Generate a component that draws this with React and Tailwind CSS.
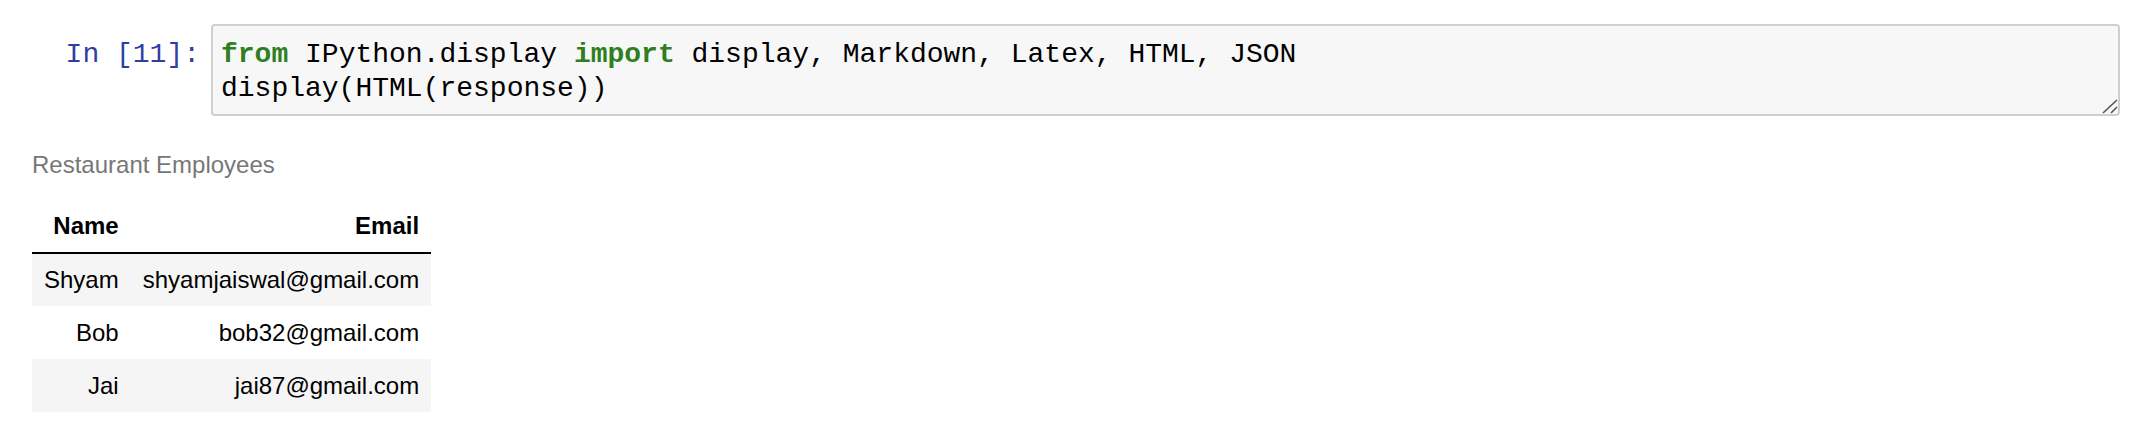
import React from 'react';

const employees = [
  { name: 'Shyam', email: 'shyamjaiswal@gmail.com' },
  { name: 'Bob', email: 'bob32@gmail.com' },
  { name: 'Jai', email: 'jai87@gmail.com' },
];

function ResizeGrip() {
  return (
    <svg className="absolute right-0 bottom-0" width="16" height="16" viewBox="0 0 16 16">
      <line x1="1" y1="15" x2="15" y2="2" stroke="#555" strokeWidth="1.6" />
      <line x1="9" y1="15" x2="15" y2="9" stroke="#555" strokeWidth="1.6" />
    </svg>
  );
}

export default function App() {
  return (
    <div className="w-[2144px] h-[432px] bg-white overflow-hidden">
      {/* input cell */}
      <div className="flex pt-[24px] pr-[24px]">
        <div className="w-[211px] shrink-0 pr-[11px] pt-[14px] text-right font-['Liberation_Mono',monospace] text-[28px] leading-[34px] text-[#303F9F] whitespace-pre">
          In [11]:
        </div>
        <div className="relative flex-1 border-2 border-[#cfcfcf] rounded-[4px] bg-[#f7f7f7] pt-[12px] pb-[8px] pl-[8px]">
          <pre className="font-['Liberation_Mono',monospace] text-[28px] leading-[34px] text-black m-0">
            <span className="font-bold text-[#2f7f22]">from</span> IPython.display{' '}
            <span className="font-bold text-[#2f7f22]">import</span> display, Markdown, Latex, HTML, JSON
            {'\n'}display(HTML(response))
          </pre>
          <ResizeGrip />
        </div>
      </div>

      {/* output */}
      <div className="pl-[32px] pt-[35px] font-['Liberation_Sans',Arial,sans-serif]">
        <div className="text-[24px] leading-[27px] text-[#777]">Restaurant Employees</div>
        <table className="mt-[22px] border-collapse text-[24px] text-black">
          <thead>
            <tr className="border-b-2 border-black">
              <th className="h-[53px] px-[12px] py-0 text-right font-bold">Name</th>
              <th className="h-[53px] px-[12px] py-0 text-right font-bold">Email</th>
            </tr>
          </thead>
          <tbody>
            {employees.map((e, i) => (
              <tr key={e.email} className={i % 2 === 0 ? 'bg-[#f5f5f5]' : 'bg-white'}>
                <td className="h-[53px] px-[12px] py-0 text-right">{e.name}</td>
                <td className="h-[53px] px-[12px] py-0 text-right">{e.email}</td>
              </tr>
            ))}
          </tbody>
        </table>
      </div>
    </div>
  );
}
